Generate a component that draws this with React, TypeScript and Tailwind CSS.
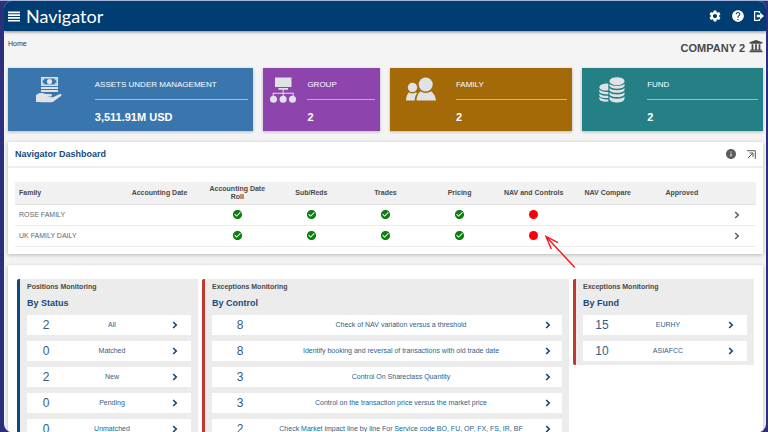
import React from 'react';
import { FaUniversity } from 'react-icons/fa';
import { MdCheckCircle, MdHelp, MdInfo, MdSettings } from 'react-icons/md';

type Tile = {
  label: string;
  value: string;
  color: string;
  icon: React.ReactNode;
};

type MonitorItem = { count: number; label: string };

const COLUMNS = ['Accounting Date', 'Accounting Date Roll', 'Sub/Reds', 'Trades', 'Pricing', 'NAV and Controls', 'NAV Compare', 'Approved'];

const FAMILIES = [
  { name: 'ROSE FAMILY', status: ['', 'ok', 'ok', 'ok', 'ok', 'ko', '', ''] },
  { name: 'UK FAMILY DAILY', status: ['', 'ok', 'ok', 'ok', 'ok', 'ko', '', ''] },
];

const BY_STATUS: MonitorItem[] = [
  { count: 2, label: 'All' },
  { count: 0, label: 'Matched' },
  { count: 2, label: 'New' },
  { count: 0, label: 'Pending' },
  { count: 0, label: 'Unmatched' },
];

const BY_CONTROL: MonitorItem[] = [
  { count: 8, label: 'Check of NAV variation versus a threshold' },
  { count: 8, label: 'Identify booking and reversal of transactions with old trade date' },
  { count: 3, label: 'Control On Shareclass Quantity' },
  { count: 3, label: 'Control on the transaction price versus the market price' },
  { count: 2, label: 'Check Market impact line by line For Service code BO, FU, OP, FX, FS, IR, BF' },
];

const BY_FUND: MonitorItem[] = [
  { count: 15, label: 'EURHY' },
  { count: 10, label: 'ASIAFCC' },
];

function HandMoneyIcon() {
  return (
    <svg viewBox="0 0 26 26" className="h-[26px] w-[26px]" fill="currentColor" aria-hidden="true">
      <path fillRule="evenodd" d="M5 0h17v9H5zM6.500 1.500v6h14v-6z" />
      <path d="M6.500 1.500h2.500l-2.500 2.500zM20.500 1.500v2.500l-2.500-2.500zM6.500 7.500v-2.500l2.500 2.500zM20.500 7.500h-2.500l2.500-2.500z" />
      <circle cx="13.500" cy="4.500" r="2.600" />
      <path d="M5 10h17v2H5zM5 13h17v2H5z" />
      <path d="M0 18c2-1.700 4-2.300 6.500-1.900l3 .8h5c1.600 0 2 2.100.4 2.500l-4 .6 6 .2 6.500-3c1.600-.6 3 .6 1.600 1.900l-7.500 5.300c-1 .7-2 .9-3.200.9H6.500L3.500 25H0z" />
    </svg>
  );
}

function GroupIcon() {
  return (
    <svg viewBox="0 0 26 26" className="h-[26px] w-[26px]" fill="currentColor" aria-hidden="true">
      <path d="M5 .5h16.500v9.500H5zM8.500 11h9.500v1.800H8.500z" />
      <path d="M12.700 12.500h1v3.300h10v4h-1v-3h-9v3h-1v-3h-9v3h-1v-4h10z" />
      <circle cx="3.500" cy="22.300" r="3.500" />
      <circle cx="13.100" cy="22.300" r="3.500" />
      <circle cx="22.500" cy="22.300" r="3.500" />
    </svg>
  );
}

function FamilyIcon() {
  return (
    <svg viewBox="0 0 30 24" className="h-6 w-[30px]" fill="currentColor" aria-hidden="true">
      <circle cx="6.500" cy="10.500" r="4.700" />
      <path d="M0 23.500c.2-3.700 1.200-6.400 3-8.200 2 1.600 5 1.600 7 0l1 .9c-1.500 1.900-2.200 4.200-2.300 7.300z" />
      <circle cx="19.700" cy="7.500" r="7" />
      <path d="M10.500 23.500c.3-4.500 1.500-7.200 4-9.200 3 2.300 7.500 2.300 10.500 0 2.800 2 4.500 4.700 5 9.200z" />
    </svg>
  );
}

function FundIcon() {
  return (
    <svg viewBox="0 0 26 26" className="h-[26px] w-[26px]" fill="currentColor" aria-hidden="true">
      <ellipse cx="18" cy="4.200" rx="7.500" ry="4" />
      <path d="M10.500 6.800c2.500 3 12.500 3 15 0v2.300c-2 3.500-13 3.500-15 0zM10.500 11c2.500 3 12.500 3 15 0v2.200c-2 3.500-13 3.500-15 0zM10.500 15.200c2.500 3 12.500 3 15 0v2.200c-2 3.500-13 3.500-15 0zM10.500 19.400c2.500 3 12.500 3 15 0V22c-1 4.700-14 4.700-15 0z" />
      <path d="M9.300 6.500v7C5 14 .5 12.800.3 10.200.3 8 4 6.500 9.300 6.500z" />
      <path d="M.3 12.600c1.500 2 5 2.700 9 2.400v2.200c-4.500.4-8.500-.5-9-2.600zM.3 16.400c1.500 2 5 2.700 9 2.400V21c-4.500.4-8.500-.5-9-2.600zM.3 20c1.500 2 5 2.700 9 2.400v2.200c-4.500.4-8.500-.5-9-2.600z" />
    </svg>
  );
}

function Chevron() {
  return (
    <svg viewBox="0 0 6 8" className="h-2 w-[6px]" fill="none" stroke="currentColor" strokeWidth="1.700" aria-hidden="true">
      <path d="M1.200 1l3 3-3 3" />
    </svg>
  );
}

const TILES: Tile[] = [
  { label: 'ASSETS UNDER MANAGEMENT', value: '3,511.91M USD', color: 'bg-[#3a76ae]', icon: <HandMoneyIcon /> },
  { label: 'GROUP', value: '2', color: 'bg-[#8e44ad]', icon: <GroupIcon /> },
  { label: 'FAMILY', value: '2', color: 'bg-[#a56a08]', icon: <FamilyIcon /> },
  { label: 'FUND', value: '2', color: 'bg-[#248086]', icon: <FundIcon /> },
];

function Header() {
  return (
    <header className="relative flex h-[30px] shrink-0 items-center bg-[#003d73] pr-[2px] pl-1 text-white shadow-[0_1px_3px_rgba(0,0,0,0.45)]">
      <button type="button" aria-label="Menu">
        <svg viewBox="0 0 12 11" className="h-[11px] w-3" fill="currentColor" aria-hidden="true">
          <path d="M0 .5h12v1.700H0zM0 3.300h12V5H0zM0 6.100h12v1.700H0zM0 8.900h12v1.700H0z" />
        </svg>
      </button>
      <span className="ml-[6px] font-['Lato',sans-serif] text-[18px] leading-[24px]">Navigator</span>
      <div className="ml-auto flex items-center gap-[9px]">
        <button type="button" aria-label="Settings">
          <MdSettings className="h-[14px] w-[14px]" />
        </button>
        <button type="button" aria-label="Help">
          <MdHelp className="h-[14px] w-[14px]" />
        </button>
        <button type="button" aria-label="Log out">
          <svg viewBox="0 0 10 10" className="h-[10px] w-[10px]" aria-hidden="true">
            <path d="M5.500 2V.6H.6v8.800h4.900V8" fill="none" stroke="currentColor" strokeWidth="1.200" />
            <path d="M2.800 3.700h3.200V1.600L10 5 6 8.400V6.300H2.800z" fill="currentColor" />
          </svg>
        </button>
      </div>
    </header>
  );
}

function StatTile({ label, value, color, icon }: Tile) {
  return (
    <section className={`flex h-[63px] text-white shadow-[0_1px_3px_rgba(0,0,0,0.25)] ${color}`}>
      <div className="flex w-1/3 shrink-0 justify-center pt-[9px] text-[#dfe3e6]">{icon}</div>
      <div className="min-w-0 flex-1 px-[5px] pt-3">
        <h2 className="text-[8px] leading-[10px] whitespace-nowrap">{label}</h2>
        <div className="mt-[9px] border-t border-white/50" />
        <p className="mt-[11px] text-[11px] leading-[12px] font-bold whitespace-nowrap">{value}</p>
      </div>
    </section>
  );
}

function StatusCell({ status }: { status: string }) {
  if (status === 'ok') return <MdCheckCircle className="mx-auto h-[11px] w-[11px] text-[#0b800f]" aria-label="Done" />;
  if (status === 'ko') return <span className="mx-auto block h-[9px] w-[9px] rounded-full bg-[#fb0007]" />;
  return null;
}

function Dashboard() {
  return (
    <section className="relative mt-[11px] bg-white pb-[7px] shadow-[0_1px_4px_rgba(0,0,0,0.25)]">
      <div className="flex h-[26px] items-center border-b-2 border-[#eeeeee] px-[7px]">
        <h2 className="text-[9px] leading-[12px] font-bold text-[#174a7c]">Navigator Dashboard</h2>
        <div className="ml-auto flex items-center gap-[10px] text-[#5c5c5c]">
          <button type="button" aria-label="Information">
            <MdInfo className="h-3 w-3" />
          </button>
          <button type="button" aria-label="Expand">
            <svg viewBox="0 0 9 9" className="h-[9px] w-[9px]" fill="none" stroke="currentColor" aria-hidden="true">
              <path d="M0 .7h8.300V9" strokeWidth="1" />
              <path d="M1 8l5-5M2.500 3H6v4" strokeWidth="1" />
            </svg>
          </button>
        </div>
      </div>
      <div className="px-[7px] pt-[14px]">
        <table className="w-full table-fixed border-collapse text-[7px] leading-[8px]">
          <colgroup>
            <col className="w-[14%]" />
            <col className="w-[11%]" />
            <col span={7} className="w-[10%]" />
            <col className="w-[5%]" />
          </colgroup>
          <thead>
            <tr className="h-[22px] border-b border-[#e2e2e2] bg-[#f1f1f1] text-[#4a4a4a]">
              <th scope="col" className="pl-1 text-left">Family</th>
              {COLUMNS.map((column) => (
                <th key={column} scope="col" className="px-[5px]">{column}</th>
              ))}
              <th scope="col" aria-label="Details" />
            </tr>
          </thead>
          <tbody>
            {FAMILIES.map((family) => (
              <tr key={family.name} className="h-[21px] border-b border-[#ececec] text-[#666666]">
                <td className="pl-1">{family.name}</td>
                {family.status.map((status, i) => (
                  <td key={COLUMNS[i]}>
                    <StatusCell status={status} />
                  </td>
                ))}
                <td className="text-center">
                  <button type="button" aria-label={`Open ${family.name}`} className="block w-full">
                    <span className="flex justify-center"><Chevron /></span>
                  </button>
                </td>
              </tr>
            ))}
          </tbody>
        </table>
      </div>
      {/* Pointer on the failed control */}
      <svg viewBox="0 0 32 34" className="absolute top-[93px] left-[71%] h-[34px] w-8" fill="none" stroke="#fb1414" strokeWidth="1.400" aria-hidden="true">
        <path d="M2 1.500l28.800 31M14 7.700L2 1.500 7.300 14" />
      </svg>
    </section>
  );
}

type MonitorProps = {
  title: string;
  subtitle: string;
  items: MonitorItem[];
  accent: string;
  columns: string;
};

function Monitor({ title, subtitle, items, accent, columns }: MonitorProps) {
  return (
    <section className={`rounded-l-[2px] border-l-[3px] bg-[#ececec] pt-1 pr-[7px] pb-1 pl-[7px] ${accent}`}>
      <h3 className="text-[7px] leading-[8px] font-bold text-[#4a4a4a]">{title}</h3>
      <h2 className="mt-[6px] text-[9px] leading-[12px] font-bold text-[#174a7c]">{subtitle}</h2>
      <ul className="mt-[6px] flex flex-col gap-[6px]">
        {items.map((item) => (
          <li key={item.label}>
            <button type="button" className={`grid h-5 w-full items-center bg-white text-[#2d5f8b] ${columns}`}>
              <span className="text-[12px] leading-[12px]">{item.count}</span>
              <span className="text-[7px] leading-[8px] whitespace-nowrap">{item.label}</span>
              <span className="flex justify-center text-[#174a7c]"><Chevron /></span>
            </button>
          </li>
        ))}
      </ul>
    </section>
  );
}

export default function App() {
  return (
    <div className="h-screen border-t border-[#a3b4d8] bg-[#2b307c] pr-[2px] pl-1 font-['Liberation_Sans',Arial,sans-serif]">
      <div className="flex h-full flex-col overflow-hidden rounded-lg bg-[#f4f4f4]">
        <Header />
        <main className="pr-[3px] pl-1">
          <div className="flex h-[37px] justify-between">
            <a href="#home" className="pt-[9px] text-[7px] leading-[8px] text-[#333333]">Home</a>
            <div className="flex items-center gap-1 self-start pt-[7px] text-[#484848]">
              <span className="pt-1 text-[11px] leading-[12px] font-bold">COMPANY 2</span>
              <FaUniversity className="h-[14px] w-[14px]" />
            </div>
          </div>
          <div className="grid grid-cols-[245fr_117fr_181fr_181fr] gap-[10px]">
            {TILES.map((tile) => (
              <StatTile key={tile.label} {...tile} />
            ))}
          </div>
          <Dashboard />
          <div className="mt-[11px] grid grid-cols-[181fr_367fr_181fr] items-start gap-1 bg-white px-[9px] pt-[14px] pb-4 shadow-[0_1px_4px_rgba(0,0,0,0.25)]">
            <Monitor title="Positions Monitoring" subtitle="By Status" items={BY_STATUS} accent="border-[#0f4880]" columns="grid-cols-[38px_1fr_32px]" />
            <Monitor title="Exceptions Monitoring" subtitle="By Control" items={BY_CONTROL} accent="border-[#c0392b]" columns="grid-cols-[56px_1fr_28px]" />
            <Monitor title="Exceptions Monitoring" subtitle="By Fund" items={BY_FUND} accent="border-[#c0392b]" columns="grid-cols-[38px_1fr_32px]" />
          </div>
        </main>
      </div>
    </div>
  );
}
